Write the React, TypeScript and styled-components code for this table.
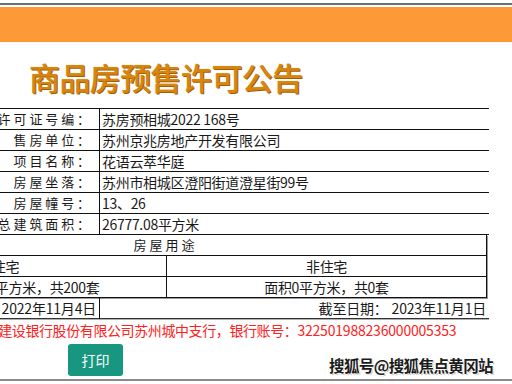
import React from "react";
import styled, { createGlobalStyle } from "styled-components";

const GlobalStyle = createGlobalStyle`
  html, body {
    margin: 0;
    padding: 0;
    background: #ffffff;
    overflow: hidden;
  }
  body {
    font-family: "Noto Sans CJK SC", "Noto Sans", sans-serif;
    color: #1a1a1a;
  }
`;

const Page = styled.div`
  position: relative;
  width: 512px;
  height: 384px;
  overflow: hidden;
`;

const TopRule = styled.div`
  margin-top: 3px;
  height: 2px;
  background: #6e6e6e;
`;

const OrangeBand = styled.div`
  margin-top: 2px;
  height: 35px;
  background: #fd9a37;
`;

const TitleBar = styled.div`
  height: 66px;
  display: flex;
  align-items: center;
  padding-left: 29px;
  padding-top: 2px;
  box-sizing: border-box;
`;

const Title = styled.h1`
  margin: 0;
  font-family: "Noto Sans CJK SC", sans-serif;
  font-size: 31px;
  font-weight: 500;
  letter-spacing: -0.6px;
  color: #d6860f;
  text-shadow: 1px 1px 0 #a35d05, 0 0 1px #f0b040;
`;

const Sheet = styled.div`
  margin-left: -155px;
  width: 644px;
`;

const InfoTable = styled.div`
  border-top: 1px solid #111;
`;

const InfoRow = styled.div`
  display: grid;
  grid-template-columns: 255px 1fr;
  height: 20px;
  border-bottom: 1px solid #111;
`;

const Label = styled.div`
  border-right: 1px solid #111;
  text-align: right;
  padding-right: 6px;
  font-size: 13px;
  letter-spacing: 2.9px;
  line-height: 20px;
  white-space: nowrap;
`;

const Value = styled.div`
  padding-left: 2px;
  font-size: 14px;
  letter-spacing: -0.3px;
  line-height: 20px;
  white-space: nowrap;
`;

const UsageBox = styled.div`
  width: 642px;
  box-sizing: border-box;
  border-right: 1px solid #111;
  border-bottom: 1px solid #111;
  box-shadow: 1px 1px 0 #9a9a9a;
`;

const UsageHead = styled.div`
  height: 20px;
  border-bottom: 1px solid #111;
  text-align: center;
  font-size: 13px;
  letter-spacing: 3px;
  line-height: 20px;
`;

const UsageRow = styled.div<{ $last?: boolean }>`
  display: grid;
  grid-template-columns: 322px 1fr;
  height: 20px;
  border-bottom: ${(p) => (p.$last ? "none" : "1px solid #111")};
`;

const UsageCell = styled.div<{ $divider?: boolean }>`
  border-right: ${(p) => (p.$divider ? "1px solid #111" : "none")};
  text-align: center;
  font-size: 14px;
  letter-spacing: -0.3px;
  line-height: 20px;
  white-space: nowrap;
`;

const DateRow = styled.div`
  display: grid;
  grid-template-columns: 255px 1fr;
  height: 20px;
  border-bottom: 1px solid #333;
  box-shadow: 0 1px 0 #b0b0b0;
`;

const DateCell = styled.div<{ $divider?: boolean }>`
  border-right: ${(p) => (p.$divider ? "1px solid #111" : "none")};
  text-align: right;
  padding-right: 3px;
  font-size: 14px;
  letter-spacing: -0.2px;
  line-height: 21px;
  white-space: nowrap;
`;

const Gap = styled.span<{ $w: number }>`
  display: inline-block;
  width: ${(p) => p.$w}px;
`;

const BankLine = styled.div`
  margin-left: -29px;
  height: 22px;
  font-size: 14px;
  letter-spacing: -0.4px;
  line-height: 22px;
  color: #ff2020;
  white-space: nowrap;
`;

const Account = styled.span`
  letter-spacing: -0.2px;
`;

const PrintButton = styled.button`
  margin: 3px 0 0 68px;
  width: 55px;
  height: 32px;
  border: none;
  border-radius: 3px;
  background: #17977f;
  color: #ffffff;
  font-family: "Noto Sans CJK SC", sans-serif;
  font-size: 14px;
  padding: 0;
`;

const BottomRule = styled.div`
  position: absolute;
  left: 0;
  right: 0;
  top: 379px;
  height: 2px;
  background: #8c8c8c;
`;

const Watermark = styled.div`
  position: absolute;
  left: 329px;
  top: 354px;
  font-family: "Noto Sans CJK SC", sans-serif;
  font-size: 15.5px;
  font-weight: 700;
  letter-spacing: -0.6px;
  color: #1c1c1c;
  text-shadow: -1px 0 0 #fff, 1px 0 0 #fff, 0 -1px 0 #fff, 0 1px 0 #fff,
    1px 1px 1px #888;
  white-space: nowrap;
`;

const rows: [string, string][] = [
  ["预售许可证号编：", "苏房预相城2022 168号"],
  ["售房单位：", "苏州京兆房地产开发有限公司"],
  ["项目名称：", "花语云萃华庭"],
  ["房屋坐落：", "苏州市相城区澄阳街道澄星街99号"],
  ["房屋幢号：", "13、26"],
  ["总建筑面积：", "26777.08平方米"],
];

const App = () => {
  return (
    <Page>
      <GlobalStyle />
      <TopRule />
      <OrangeBand />
      <TitleBar>
        <Title>商品房预售许可公告</Title>
      </TitleBar>
      <Sheet>
        <InfoTable>
          {rows.map(([label, value]) => (
            <InfoRow key={label}>
              <Label>{label}</Label>
              <Value>{value}</Value>
            </InfoRow>
          ))}
        </InfoTable>
        <UsageBox>
          <UsageHead>房屋用途</UsageHead>
          <UsageRow>
            <UsageCell $divider>住宅</UsageCell>
            <UsageCell>非住宅</UsageCell>
          </UsageRow>
          <UsageRow $last>
            <UsageCell $divider>面积26777.08平方米，共200套</UsageCell>
            <UsageCell>面积0平方米，共0套</UsageCell>
          </UsageRow>
        </UsageBox>
        <DateRow>
          <DateCell $divider>发证日期： 2022年11月4日</DateCell>
          <DateCell>
            截至日期：<Gap $w={4} />2023年11月1日
          </DateCell>
        </DateRow>
      </Sheet>
      <BankLine>
        中国建设银行股份有限公司苏州城中支行，银行账号：
        <Account>322501988236000005353</Account>
      </BankLine>
      <PrintButton>打印</PrintButton>
      <BottomRule />
      <Watermark>搜狐号@搜狐焦点黄冈站</Watermark>
    </Page>
  );
};

export default App;
